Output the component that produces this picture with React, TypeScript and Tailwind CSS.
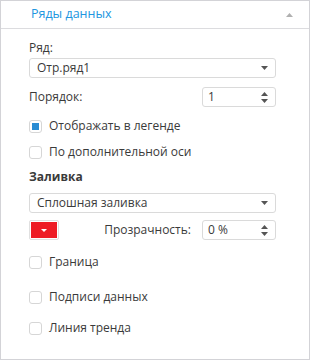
import React from 'react';

const Caret = ({ up = false, color = '#555' }: { up?: boolean; color?: string }) => (
    <svg width="7" height="4" viewBox="0 0 7 4" className="block">
        <path d={up ? 'M0 4 L3.5 0 L7 4 Z' : 'M0 0 L7 0 L3.5 4 Z'} fill={color} />
    </svg>
);

const Select = ({ value }: { value: string }) => (
    <div className="w-[247px] h-[20px] border border-[#dadada] rounded-[3px] bg-white flex items-center pl-[7px] pr-[7px]">
        <span className="flex-1">{value}</span>
        <Caret />
    </div>
);

const Spin = ({ value }: { value: string }) => (
    <div className="w-[74px] h-[20px] border border-[#dadada] rounded-[3px] bg-white flex items-center pl-[5px] pr-[7px]">
        <span className="flex-1">{value}</span>
        <div className="flex flex-col gap-[3px]">
            <Caret up />
            <Caret />
        </div>
    </div>
);

const Check = ({ label, checked = false, className = '' }: { label: string; checked?: boolean; className?: string }) => (
    <div className={`flex items-center h-[14px] ${className}`}>
        <div className="w-[13px] h-[13px] border border-[#d6d6d6] rounded-[3px] bg-white flex items-center justify-center">
            {checked && <div className="w-[7px] h-[7px] bg-[#2a8cd3]" />}
        </div>
        <span className="ml-[7px]">{label}</span>
    </div>
);

export default function App() {
    return (
        <div
            className="w-[310px] h-[360px] border border-[#d3d3d7] bg-white text-[12px] text-[#3a3a3a]"
            style={{ fontFamily: '"Open Sans", "Noto Sans", sans-serif' }}
        >
            <div className="h-[28px] border-b border-[#dcdcdf] flex items-center pl-[30px] pr-[16px]">
                <span className="flex-1 text-[#2196e0] text-[12.5px]">Ряды данных</span>
                <Caret up color="#b0b0b0" />
            </div>

            <div className="pl-[28px]">
                <div className="mt-[9px] h-[20px] leading-[20px]">Ряд:</div>
                <div>
                    <Select value="Отр.ряд1" />
                </div>

                <div className="mt-[9px] w-[247px] flex items-center justify-between">
                    <span>Порядок:</span>
                    <Spin value="1" />
                </div>

                <Check className="mt-[12px]" label="Отображать в легенде" checked />
                <Check className="mt-[12px]" label="По дополнительной оси" />

                <div className="mt-[10px] h-[16px] leading-[16px] font-bold">Заливка</div>
                <div className="mt-[8px]">
                    <Select value="Сплошная заливка" />
                </div>

                <div className="mt-[7px] w-[247px] flex items-center">
                    <div className="w-[30px] h-[20px] border border-[#e0e0e0] rounded-[2px] p-[1px] bg-white">
                        <div className="w-full h-full bg-[#ee1c25] flex items-center justify-center">
                            <svg width="6" height="3" viewBox="0 0 6 3">
                                <path d="M0 0 L6 0 L3 3 Z" fill="#fff" />
                            </svg>
                        </div>
                    </div>
                    <span className="ml-auto mr-[11px]">Прозрачность:</span>
                    <Spin value="0 %" />
                </div>

                <Check className="mt-[15px]" label="Граница" />
                <Check className="mt-[21px]" label="Подписи данных" />
                <Check className="mt-[17px]" label="Линия тренда" />
            </div>
        </div>
    );
}
